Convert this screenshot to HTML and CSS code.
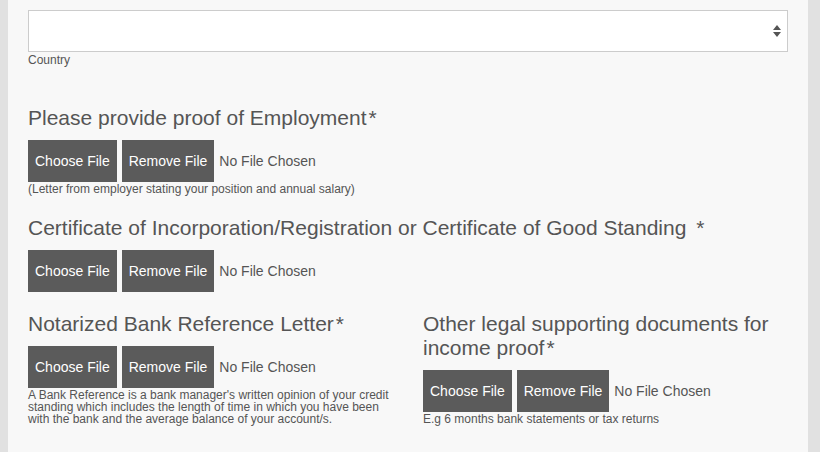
FILE: index.html
```html
<!DOCTYPE html>
<html>
<head>
<meta charset="utf-8">
<link rel="stylesheet" href="styles.css">
</head>
<body>
<div class="panel">
  <div class="field">
    <div class="select-wrap">
      <select class="select"><option></option></select>
      <svg class="arrows" width="10" height="14" viewBox="0 0 10 14"><path d="M5 1 L9 6 L1 6 Z M1 8 L9 8 L5 13 Z" fill="#555"/></svg>
    </div>
    <div class="label">Country</div>
  </div>

  <div class="section first">
    <h2 class="title">Please provide proof of Employment<span class="req">*</span></h2>
    <div class="file-row">
      <button class="btn">Choose File</button>
      <button class="btn">Remove File</button>
      <span class="status">No File Chosen</span>
    </div>
    <div class="help">(Letter from employer stating your position and annual salary)</div>
  </div>

  <div class="section">
    <h2 class="title">Certificate of Incorporation/Registration or Certificate of Good Standing <span class="req wide">*</span></h2>
    <div class="file-row">
      <button class="btn">Choose File</button>
      <button class="btn">Remove File</button>
      <span class="status">No File Chosen</span>
    </div>
  </div>

  <div class="cols">
    <div class="section">
      <h2 class="title">Notarized Bank Reference Letter<span class="req">*</span></h2>
      <div class="file-row">
        <button class="btn">Choose File</button>
        <button class="btn">Remove File</button>
        <span class="status">No File Chosen</span>
      </div>
      <div class="help tight">A Bank Reference is a bank manager's written opinion of your credit standing which includes the length of time in which you have been with the bank and the average balance of your account/s.</div>
    </div>
    <div class="section">
      <h2 class="title">Other legal supporting documents for income proof<span class="req">*</span></h2>
      <div class="file-row">
        <button class="btn">Choose File</button>
        <button class="btn">Remove File</button>
        <span class="status">No File Chosen</span>
      </div>
      <div class="help">E.g 6 months bank statements or tax returns</div>
    </div>
  </div>
</div>
</body>
</html>
```
FILE: styles.css
```css
html, body {
  margin: 0;
  padding: 0;
  background: #e1e1e1;
  height: 100%;
}
body {
  font-family: "Liberation Sans", Arial, sans-serif;
  color: #555;
}
.panel {
  margin: 0 12px 0 8px;
  background: #f8f8f8;
  padding: 10px 20px 20px 20px;
  min-height: 452px;
  box-sizing: border-box;
}
.field {
  margin-bottom: 38px;
}
.select-wrap {
  position: relative;
}
.select {
  display: block;
  width: 100%;
  height: 42px;
  box-sizing: border-box;
  border: 1px solid #ccc;
  background: #fff;
  appearance: none;
  -webkit-appearance: none;
  border-radius: 0;
  margin: 0;
  outline: none;
}
.arrows {
  position: absolute;
  right: 6px;
  top: 14px;
}
.label {
  font-size: 12px;
  line-height: 16px;
  color: #555;
}
.section {
  margin-bottom: 20px;
}
.title {
  font-size: 21px;
  font-weight: normal;
  line-height: 24px;
  margin: 0 0 10px 0;
  color: #555;
}
.req {
  margin-left: 2px;
}
.req.wide {
  margin-left: 4px;
}
.file-row {
  display: flex;
  align-items: center;
  gap: 5px;
}
.btn {
  height: 42px;
  padding: 0 7px;
  border: none;
  border-radius: 0;
  background: #5b5b5b;
  color: #fff;
  font-family: "Liberation Sans", Arial, sans-serif;
  font-size: 14px;
  margin: 0;
}
.status {
  font-size: 14px;
  color: #555;
}
.help {
  font-size: 12px;
  line-height: 14px;
  color: #555;
}
.help.tight {
  line-height: 12px;
  margin-top: 1px;
}
.cols {
  display: grid;
  grid-template-columns: 1fr 1fr;
  column-gap: 30px;
}
```
